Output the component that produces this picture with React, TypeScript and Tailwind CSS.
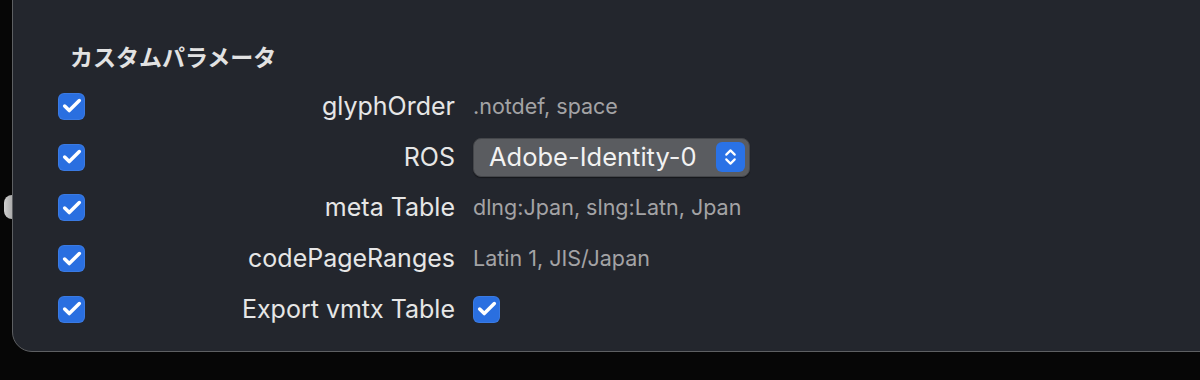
import { Check, ChevronUp, ChevronDown } from 'lucide-react';

const font = { fontFamily: 'Inter, "Noto Sans CJK JP", sans-serif' };

const rows = [
  { label: 'glyphOrder', value: '.notdef, space' },
  { label: 'ROS', value: 'popup' },
  { label: 'meta Table', value: 'dlng:Jpan, slng:Latn, Jpan' },
  { label: 'codePageRanges', value: 'Latin 1, JIS/Japan' },
  { label: 'Export vmtx Table', value: 'check' },
];

const Checkbox = () => (
  <div className="w-[27px] h-[27px] rounded-[6px] bg-[#2a6fe0] flex items-center justify-center shadow-[inset_0_0_0_1px_rgba(255,255,255,0.08)]">
    <Check size={22} strokeWidth={3.8} className="text-white" />
  </div>
);

const Popup = () => (
  <div className="w-[277px] h-[39px] rounded-[8px] bg-[#5a5c60] border border-[#44464a] flex items-center justify-between pl-[15px] pr-[4px] shadow-[0_1px_1px_rgba(0,0,0,0.4)]">
    <span className="text-[25.5px] text-[#f2f2f2] leading-none">Adobe-Identity-0</span>
    <div className="w-[29px] h-[30px] rounded-[6px] bg-[#2a72e6] flex flex-col items-center justify-center">
      <ChevronUp size={17} strokeWidth={3} className="text-white -mb-[4px]" />
      <ChevronDown size={17} strokeWidth={3} className="text-white -mt-[4px]" />
    </div>
  </div>
);

export default function App() {
  return (
    <div className="w-[1200px] h-[380px] bg-[#060606] relative overflow-hidden" style={font}>
      {/* something peeking out behind the panel */}
      <div className="absolute left-[4px] top-[195px] w-[16px] h-[24px] rounded-full bg-gradient-to-r from-[#d0d0d0] to-[#8a8a8a]" />
      <div className="absolute left-[12px] top-[-20px] w-[1220px] h-[372px] bg-[#23262d] border border-[#5d5f62] rounded-b-[20px] rounded-tl-none">
        <div className="pl-[45px] pt-[66px]">
          <h2 className="text-[23px] font-bold text-[#e2e2e2] leading-none pl-[12px] mb-[11px]">カスタムパラメータ</h2>
          <div className="flex flex-col">
            {rows.map((r) => (
              <div key={r.label} className="h-[50.75px] flex items-center">
                <Checkbox />
                <div className="w-[370px] text-right text-[25px] leading-none text-[#e6e6e6]">{r.label}</div>
                <div className="ml-[18px] flex items-center">
                  {r.value === 'popup' ? (
                    <Popup />
                  ) : r.value === 'check' ? (
                    <Checkbox />
                  ) : (
                    <span className="text-[21.5px] leading-none text-[#a3a3a5]">{r.value}</span>
                  )}
                </div>
              </div>
            ))}
          </div>
        </div>
      </div>
    </div>
  );
}
